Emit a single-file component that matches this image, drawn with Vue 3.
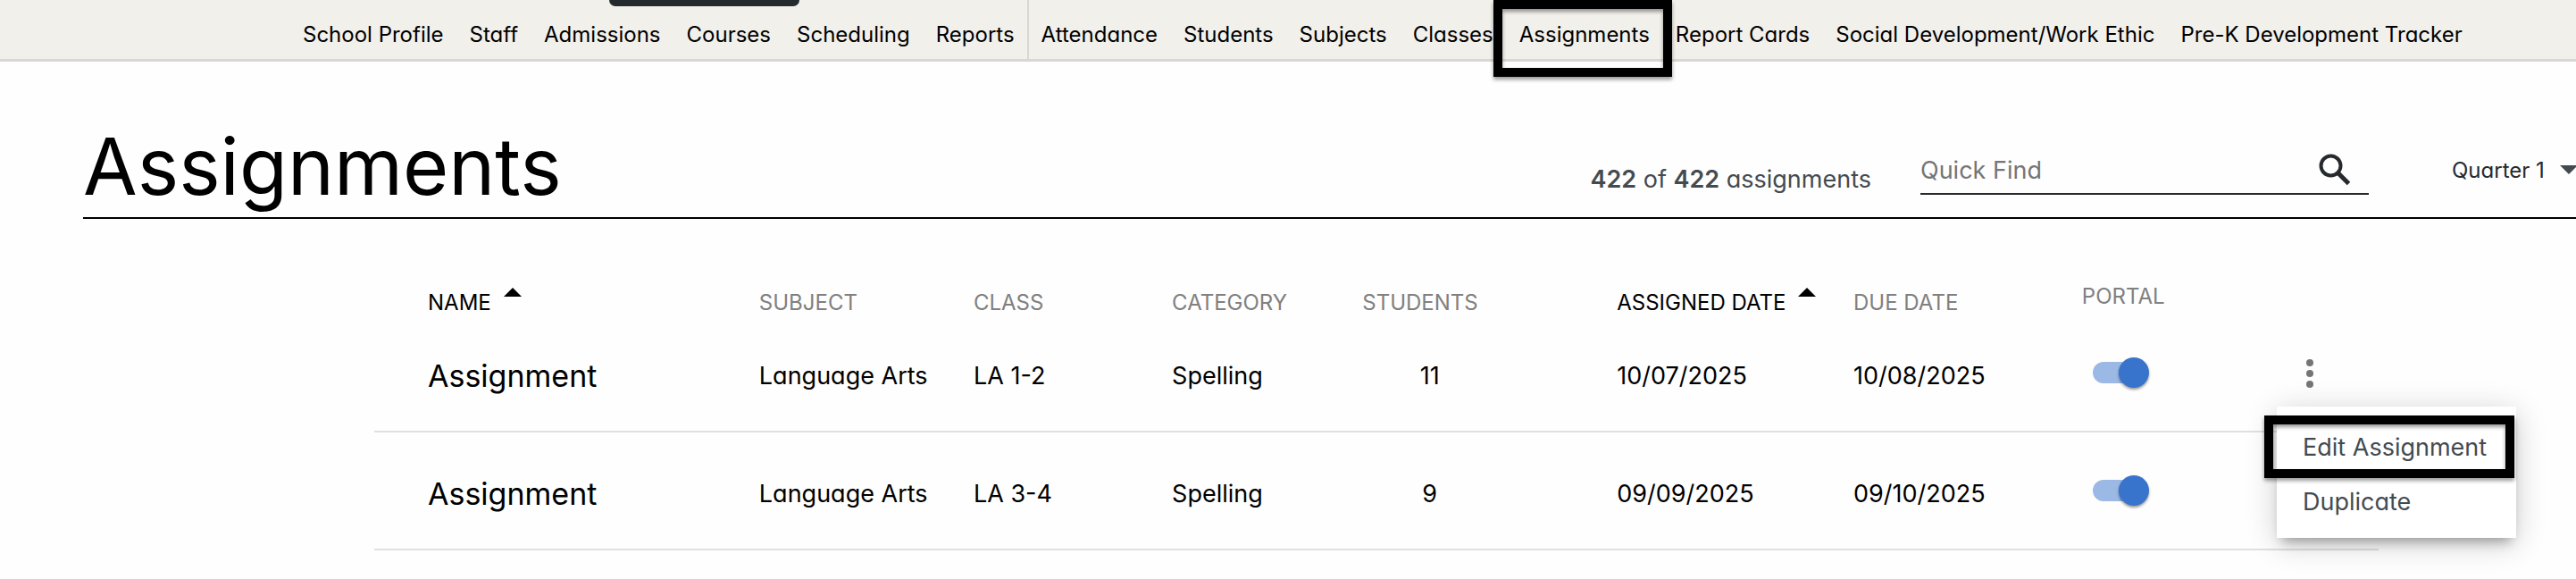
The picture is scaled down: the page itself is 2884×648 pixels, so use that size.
<script setup>
import { ref } from 'vue'

const schoolLinks = ['School Profile', 'Staff', 'Admissions', 'Courses', 'Scheduling', 'Reports']
const classLinks = [
  'Attendance',
  'Students',
  'Subjects',
  'Classes',
  'Assignments',
  'Report Cards',
  'Social Development/Work Ethic',
  'Pre-K Development Tracker',
]

const columns = [
  { key: 'name', label: 'NAME', sorted: true },
  { key: 'subject', label: 'SUBJECT' },
  { key: 'class', label: 'CLASS' },
  { key: 'category', label: 'CATEGORY' },
  { key: 'students', label: 'STUDENTS' },
  { key: 'assigned', label: 'ASSIGNED DATE', sorted: true },
  { key: 'due', label: 'DUE DATE' },
]

const rows = ref([
  { id: 1, name: 'Assignment', subject: 'Language Arts', class: 'LA 1-2', category: 'Spelling', students: 11, assigned: '10/07/2025', due: '10/08/2025', portal: true },
  { id: 2, name: 'Assignment', subject: 'Language Arts', class: 'LA 3-4', category: 'Spelling', students: 9, assigned: '09/09/2025', due: '09/10/2025', portal: true },
])

const openMenu = ref(1)
const search = ref('')
const term = ref('Quarter 1')
</script>

<template>
  <div class="page">
    <nav class="nav" aria-label="Main">
      <span class="tab"></span>
      <div class="group">
        <a v-for="l in schoolLinks" :key="l" href="#">{{ l }}</a>
      </div>
      <div class="group second">
        <a v-for="l in classLinks" :key="l" href="#" :class="{ marked: l === 'Assignments' }">{{ l }}</a>
      </div>
    </nav>

    <header class="header">
      <h1>Assignments</h1>
      <p class="count"><b>422</b> of <b>422</b> assignments</p>
      <div class="search">
        <input v-model="search" type="text" placeholder="Quick Find" aria-label="Quick Find" />
        <button type="button" aria-label="Search">
          <svg viewBox="0 0 36 36" width="36" height="36">
            <circle cx="13.5" cy="13.5" r="11" fill="none" stroke="#252a2e" stroke-width="4" />
            <path d="M22 22 L33.5 33.5" stroke="#252a2e" stroke-width="5" />
          </svg>
        </button>
      </div>
      <div class="term">
        <select v-model="term" aria-label="Term">
          <option>Quarter 1</option>
        </select>
        <svg viewBox="0 0 20 10" width="20" height="10"><path d="M0 0H20L10 10Z" fill="#444b50" /></svg>
      </div>
    </header>

    <main>
      <table>
        <thead>
          <tr>
            <th v-for="c in columns" :key="c.key" :class="'col-' + c.key" scope="col">
              <button type="button" class="sort" :class="{ sorted: c.sorted }">
                {{ c.label }}
                <svg v-if="c.sorted" viewBox="0 0 20 10" width="20" height="10"><path d="M0 10H20L10 0Z" /></svg>
              </button>
            </th>
            <th class="col-portal" scope="col">PORTAL</th>
            <th class="col-actions"></th>
          </tr>
        </thead>
        <tbody>
          <tr v-for="r in rows" :key="r.id">
            <td class="name">{{ r.name }}</td>
            <td>{{ r.subject }}</td>
            <td>{{ r.class }}</td>
            <td>{{ r.category }}</td>
            <td class="num">{{ r.students }}</td>
            <td>{{ r.assigned }}</td>
            <td>{{ r.due }}</td>
            <td class="portal"><input v-model="r.portal" type="checkbox" class="toggle" aria-label="Portal" /></td>
            <td class="actions">
              <div class="wrap">
                <button v-if="r.id === openMenu" type="button" class="kebab" aria-label="More actions">
                  <svg viewBox="0 0 8 32" width="8" height="32" fill="#757575">
                    <circle cx="4" cy="4" r="4" />
                    <circle cx="4" cy="16" r="4" />
                    <circle cx="4" cy="28" r="4" />
                  </svg>
                </button>
                <div v-if="r.id === openMenu" class="menu" role="menu">
                  <button type="button" role="menuitem" class="marked">Edit Assignment</button>
                  <button type="button" role="menuitem">Duplicate</button>
                </div>
              </div>
            </td>
          </tr>
        </tbody>
      </table>
    </main>
  </div>
</template>

<style>
body {
  margin: 0;
  background: #fefefe;
}
</style>

<style scoped>
.page {
  min-height: 100vh;
  overflow: hidden;
  background: #fefefe;
  color: #000;
  font-family: Inter, 'Open Sans', sans-serif;
  font-feature-settings: 'cv11';
  font-size: 27px;
}
button,
input,
select {
  font: inherit;
  font-feature-settings: inherit;
  color: inherit;
  border: 0;
  padding: 0;
  background: none;
  outline: 0;
}
.nav {
  position: relative;
  display: flex;
  height: 66px;
  padding-left: 339px;
  background: #f1f0eb;
  border-bottom: 3px solid #d9d7d1;
  font-size: 24px;
  white-space: nowrap;
}
.tab {
  position: absolute;
  top: 0;
  left: 682px;
  width: 213px;
  height: 7px;
  border-radius: 0 0 8px 8px;
  background: #252a2e;
}
.group {
  display: flex;
  align-items: center;
  gap: 29px;
  padding: 11px 14px 0 0;
}
.second {
  padding-left: 14px;
  border-left: 2px solid #d9d7d1;
}
.nav a {
  color: #000;
  text-decoration: none;
}
.marked {
  position: relative;
}
.marked::after {
  content: '';
  position: absolute;
  border: 10px solid #000;
  filter: drop-shadow(0 3px 2px rgba(0, 0, 0, 0.4));
  pointer-events: none;
}
.nav .marked::after {
  inset: -24px -25px -33px -29px;
}
.header {
  display: flex;
  align-items: center;
  margin-left: 93px;
  padding: 67px 0 7px;
  border-bottom: 2px solid #000;
}
h1 {
  flex: 1;
  margin: 0;
  font-size: 88px;
  font-weight: 400;
  line-height: 100px;
}
.count {
  margin: 0 55px 0 0;
  padding-top: 29px;
  color: #444b50;
}
.count b {
  font-weight: 600;
}
.search {
  display: flex;
  align-items: center;
  box-sizing: border-box;
  width: 502px;
  height: 64px;
  margin-right: 93px;
  border-bottom: 2px solid #252a2e;
}
.search input {
  flex: 1;
  min-width: 0;
  padding-top: 11px;
}
.search input::placeholder {
  color: #757575;
  opacity: 1;
}
.search button {
  display: flex;
  margin: 9px 20px 0 0;
}
.term {
  display: flex;
  align-items: center;
  width: 141px;
  margin-right: -2px;
  padding-top: 8px;
  color: #252a2e;
  font-size: 24px;
}
.term select {
  flex: 1;
  min-width: 0;
  appearance: none;
}
main {
  margin: 70px 221px 0 419px;
}
table {
  width: 100%;
  table-layout: fixed;
  border-spacing: 0;
}
th {
  box-sizing: border-box;
  height: 37px;
  padding: 0;
  vertical-align: bottom;
  text-align: left;
  color: #808080;
  font-size: 24px;
  font-weight: 400;
  line-height: 27px;
  white-space: nowrap;
}
.sort {
  display: flex;
  gap: 14px;
}
.sort svg {
  margin-top: -3px;
}
.sorted {
  color: #000;
}
.col-name {
  width: 19.2%;
  padding-left: 60px;
}
.col-subject {
  width: 10.7%;
}
.col-class {
  width: 9.9%;
}
.col-category {
  width: 9.5%;
}
.col-students {
  width: 12.7%;
}
.col-assigned {
  width: 11.8%;
}
.col-due {
  width: 11.4%;
}
.col-portal {
  width: 9.1%;
  padding-bottom: 7px;
}
td {
  height: 124px;
  padding: 6px 0 0;
  border-bottom: 2px solid #e0e0e0;
  vertical-align: middle;
  white-space: nowrap;
}
.name {
  padding-left: 60px;
  font-size: 34px;
}
.num {
  padding-right: 134px;
  text-align: center;
}
.portal {
  padding-left: 12px;
}
.toggle {
  position: relative;
  display: block;
  appearance: none;
  width: 60px;
  height: 24px;
  margin: 0 0 6px;
  border-radius: 12px;
  background: #9cb8e4;
}
.toggle::after {
  content: '';
  position: absolute;
  top: -5px;
  right: -3px;
  width: 34px;
  height: 34px;
  border-radius: 50%;
  background: #3874cc;
  box-shadow: 0 2px 3px rgba(0, 0, 0, 0.4);
}
.wrap {
  position: relative;
  height: 32px;
  margin-bottom: 4px;
}
.kebab {
  display: block;
  margin-left: 47px;
}
.kebab svg {
  display: block;
}
.menu {
  position: absolute;
  z-index: 1;
  top: 53px;
  left: 14px;
  display: flex;
  flex-direction: column;
  align-items: flex-start;
  box-sizing: border-box;
  width: 268px;
  padding: 15px 29px 10px;
  background: #fff;
  box-shadow: 0 10px 12px -6px rgba(0, 0, 0, 0.3), 0 6px 32px rgba(0, 0, 0, 0.2);
  color: #444b50;
}
.menu button {
  height: 61px;
  white-space: nowrap;
}
.menu .marked::after {
  inset: -5px auto -4px -43px;
  width: 260px;
}
</style>
